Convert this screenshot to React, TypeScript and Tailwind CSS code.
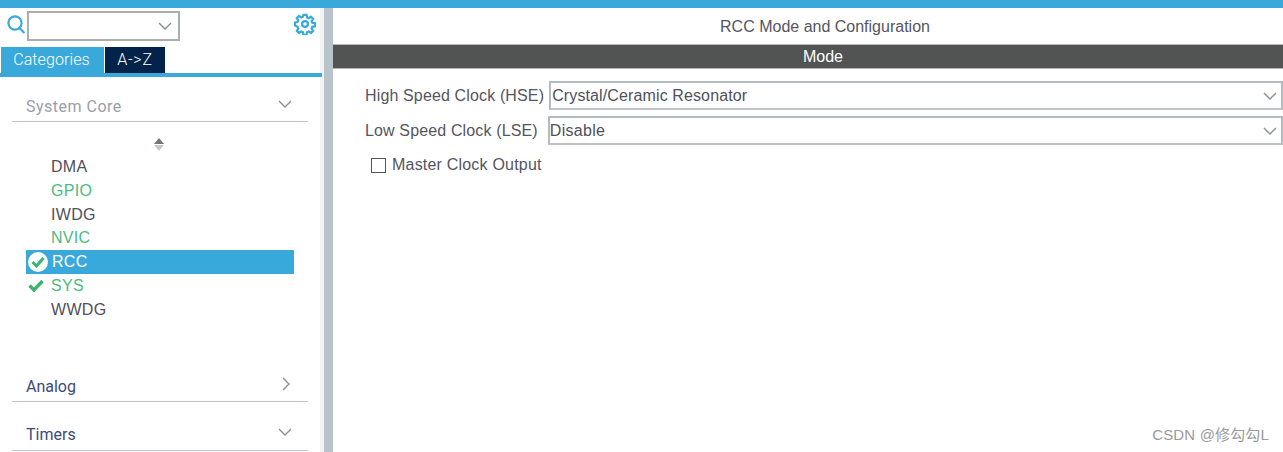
import React from "react";

const Chevron = ({ className = "" }: { className?: string }) => (
  <svg width="14" height="8" viewBox="0 0 14 8" fill="none" stroke="#8a8f94" strokeWidth="1.4" className={className}>
    <path d="M1 1l6 6 6-6" />
  </svg>
);

const Check = () => (
  <svg width="16" height="13" viewBox="0 0 16 13" fill="none" stroke="#3cb371" strokeWidth="3.4">
    <path d="M1.5 6.5l4.5 4.5L14.5 2" />
  </svg>
);

const Item = ({ label, tone, mark, active }: { label: string; tone?: string; mark?: React.ReactNode; active?: boolean }) => (
  <div className={`flex h-[23.8px] w-[268px] items-center font-['Liberation_Sans',sans-serif] ${active ? "bg-[#39a9dc] text-white" : tone ?? "text-[#50505b]"}`}>
    <div className="flex w-[25px] shrink-0 items-center justify-center">{mark}</div>
    <span className={`text-[16px] tracking-[0.3px] ${active ? "ml-[1px]" : ""}`}>{label}</span>
  </div>
);

const Section = ({ label, tone, open, className = "" }: { label: string; tone: string; open: boolean; className?: string }) => (
  <div className={`mx-[12px] flex items-start justify-between border-b border-[#bcc6cc] pl-[14px] pr-[16px] ${className}`}>
    <span className={`text-[16px] leading-[22px] ${tone}`}>{label}</span>
    {open ? (
      <Chevron className="mt-[4px]" />
    ) : (
      <svg width="8" height="14" viewBox="0 0 8 14" fill="none" stroke="#8a8f94" strokeWidth="1.4" className="mr-[2px] mt-[1px]">
        <path d="M1 1l6 6-6 6" />
      </svg>
    )}
  </div>
);

const Select = ({ value, textClass }: { value: string; textClass: string }) => (
  <div className="flex h-[29px] flex-1 items-center justify-between border-2 border-[#b4bbc0] border-b-[#c0c4c6] bg-white pr-[4px]">
    <span className={`text-[16px] text-[#50505b] ${textClass}`}>{value}</span>
    <Chevron />
  </div>
);

export default function App() {
  return (
    <div className="flex h-[452px] w-[1283px] flex-col overflow-hidden bg-white font-['Roboto',sans-serif]">
      <div className="h-[8px] shrink-0 bg-[#39a9dc]" />
      <div className="flex min-h-0 flex-1">
        <div className="flex w-[320px] shrink-0 flex-col">
          <div className="flex h-[39px] shrink-0 items-start pl-[6px] pt-[3px]">
            <svg width="20" height="22" viewBox="0 0 20 22" fill="none" stroke="#39a9dc" strokeWidth="2.2" className="mt-[3px] shrink-0">
              <circle cx="9" cy="9" r="6.6" />
              <path d="M13.5 14l5 5" />
            </svg>
            <div className="ml-[1px] flex h-[30px] w-[153px] items-center justify-end border-2 border-[#a9aeb1] pr-[6px]">
              <Chevron />
            </div>
            <svg width="22" height="22" viewBox="0 0 24 24" fill="none" stroke="#39a9dc" strokeWidth="2.4" className="ml-[114px] mt-[2px] shrink-0">
              <circle cx="12" cy="12" r="3.2" />
              <path d="M10.3 2h3.4l.5 2.9 1.9.8 2.4-1.7 2.4 2.4-1.7 2.4.8 1.9 2.9.5v3.4l-2.9.5-.8 1.9 1.7 2.4-2.4 2.4-2.4-1.7-1.9.8-.5 2.9h-3.4l-.5-2.9-1.9-.8-2.4 1.7-2.4-2.4 1.7-2.4-.8-1.9L1 13.7v-3.4l2.9-.5.8-1.9L3 5.5l2.4-2.4 2.4 1.7 1.9-.8z" />
            </svg>
          </div>
          <div className="flex h-[26px] shrink-0 items-stretch pl-[1px]">
            <div className="flex w-[103px] items-center justify-center bg-[#39a9dc] pr-[2px] text-[16px] font-light tracking-[0.1px] text-white">Categories</div>
            <div className="ml-[1px] flex w-[60px] items-center justify-center bg-[#03234b] text-[16px] font-light tracking-[0.8px] text-white">A-&gt;Z</div>
          </div>
          <div className="relative z-10 h-[4px] w-[322px] shrink-0 bg-[#39a9dc]" />
          <div className="flex min-h-0 flex-1 flex-col overflow-hidden pt-[19px]">
            <Section label="System Core" tone="text-[#9a9ea6] tracking-[0.5px]" open className="h-[26px]" />
            <div className="flex h-[29px] shrink-0 flex-col items-center justify-end">
              <svg width="10" height="13" viewBox="0 0 10 13" className="ml-[-2px]">
                <path d="M5 0l5 6H0z" fill="#70767a" />
                <path d="M5 13l5-6H0z" fill="#c4c8ca" />
              </svg>
            </div>
            <div className="ml-[26px] mt-[4px] flex flex-col">
              <Item label="DMA" />
              <Item label="GPIO" tone="text-[#4cbb7f]" />
              <Item label="IWDG" />
              <Item label="NVIC" tone="text-[#4cbb7f]" />
              <Item
                label="RCC"
                active
                mark={
                  <svg width="22" height="22" viewBox="0 0 22 22" fill="none" className="ml-[-2px]">
                    <circle cx="11" cy="11" r="10" fill="white" />
                    <path d="M5.5 11l4 4 7-8" stroke="#3cb371" strokeWidth="3" />
                  </svg>
                }
              />
              <Item label="SYS" tone="text-[#4cbb7f]" mark={<span className="ml-[-5px] flex"><Check /></span>} />
              <Item label="WWDG" />
            </div>
            <Section label="Analog" tone="text-[#3c4a7d]" open={false} className="mt-[54px] h-[26px]" />
            <Section label="Timers" tone="text-[#3c4a7d]" open className="mt-[22px] h-[27px]" />
          </div>
        </div>
        <div className="w-[4px] shrink-0 bg-[#f2f3f4]" />
        <div className="w-[9px] shrink-0 bg-[#b9c4ca]" />
        <div className="relative flex min-w-0 flex-1 flex-col font-['Liberation_Sans',sans-serif]">
          <div className="flex h-[36px] shrink-0 items-center justify-center pl-[34px] pt-[1px] text-[16px] text-[#55555f]">RCC Mode and Configuration</div>
          <div className="flex h-[25px] shrink-0 items-center justify-center border-y border-[#b5b8b8] bg-[#525453] pl-[30px] text-[16px] text-white">Mode</div>
          <div className="flex flex-col pl-[32px] pt-[12px]">
            <div className="flex h-[29px] items-center">
              <span className="mr-[5px] text-[16px] tracking-[0.14px] text-[#55555f]">High Speed Clock (HSE)</span>
              <Select value="Crystal/Ceramic Resonator" textClass="pl-[1px] tracking-[0.12px]" />
            </div>
            <div className="mt-[6px] flex h-[29px] items-center">
              <span className="mr-[10px] text-[16px] tracking-[0.14px] text-[#55555f]">Low Speed Clock (LSE)</span>
              <Select value="Disable" textClass="tracking-[0.3px]" />
            </div>
            <div className="mt-[8px] flex h-[24px] items-center pl-[6px]">
              <div className="h-[15px] w-[15px] border border-[#55585a]" />
              <span className="ml-[6px] text-[16px] tracking-[0.2px] text-[#55555f]">Master Clock Output</span>
            </div>
          </div>
          <div className="absolute bottom-[6px] right-[14px] font-['Liberation_Sans','Noto_Sans_CJK_SC',sans-serif] text-[15px] tracking-[0.16px] text-[#9a9a9a]">CSDN @修勾勾L</div>
        </div>
      </div>
    </div>
  );
}
